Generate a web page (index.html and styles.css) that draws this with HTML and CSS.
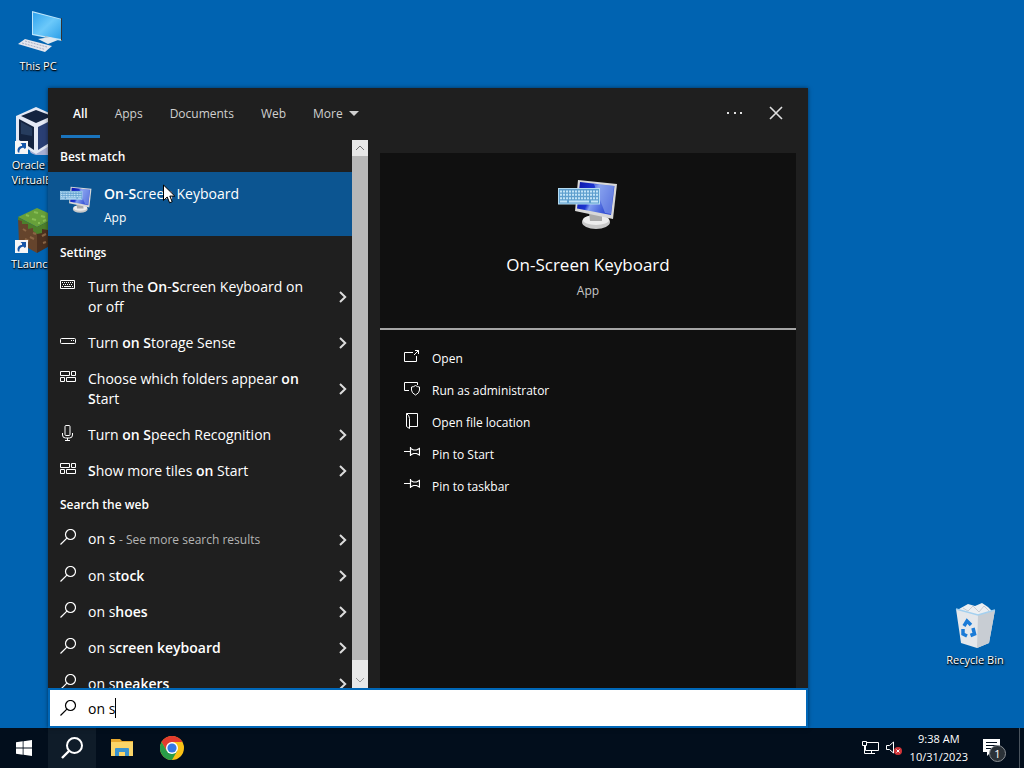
FILE: index.html
```html
<!DOCTYPE html>
<html lang="en">
<head>
    <meta charset="UTF-8">
    <meta name="viewport" content="width=device-width, initial-scale=1.0">
    <title>Desktop Search</title>
    <link rel="stylesheet" href="styles.css">
</head>
<body>
    <!-- shared icons -->
    <svg class="sprite" aria-hidden="true">
        <defs>
            <linearGradient id="screenBlue" x1="0" y1="0" x2="1" y2="0.4">
                <stop offset="0" stop-color="#0a14a8"/>
                <stop offset="0.45" stop-color="#1c35d0"/>
                <stop offset="0.55" stop-color="#7f9cf0"/>
                <stop offset="1" stop-color="#2a45d0"/>
            </linearGradient>
            <linearGradient id="pcScreen" x1="0" y1="0" x2="1" y2="1">
                <stop offset="0" stop-color="#2fa3ee"/>
                <stop offset="0.5" stop-color="#6cc9fa"/>
                <stop offset="1" stop-color="#2c9fe8"/>
            </linearGradient>
        </defs>
        <symbol id="i-search" viewBox="0 0 16 16">
            <circle cx="10.5" cy="5.5" r="5" fill="none" stroke="currentColor" stroke-width="1.2"/>
            <path d="M6.9 9.1 0.5 15.5" fill="none" stroke="currentColor" stroke-width="1.2"/>
        </symbol>
        <symbol id="i-chevron" viewBox="0 0 8 12">
            <path d="M1 1l5.2 5L1 11" fill="none" stroke="currentColor" stroke-width="2"/>
        </symbol>
        <symbol id="i-tiles" viewBox="0 0 16 16">
            <path d="M.5 2.5h9v4h-9zM11.5 2.5h4v4h-4zM.5 8.5h4v4h-4zM6.5 8.5h9v4h-9z" fill="none" stroke="currentColor"/>
        </symbol>
        <symbol id="i-pin" viewBox="0 0 16 16">
            <path d="M0 6.500h6.500M6.500 2v9M6.500 3.500l3 1.500h3l3-1.500v6.500l-3-1.500h-3l-3 1.500" fill="none" stroke="currentColor" stroke-width="1.200"/>
        </symbol>
        <symbol id="i-osk" viewBox="0 0 60 52">
            <ellipse cx="38" cy="43" rx="14" ry="7" fill="#c9c9c9"/>
            <ellipse cx="38" cy="41" rx="13" ry="5" fill="#ededed"/>
            <path d="M31 33l13 4v5H32z" fill="#aaa"/>
            <path d="M20 1l39 4-4 35-38-8z" fill="#d8d8d8"/>
            <path d="M22 3l34.500 4-3.500 29-34-6.500z" fill="url(#screenBlue)"/>
            <path d="M36 5l20 2-3 28-6-1z" fill="#8ea6ee" opacity="0.6"/>
            <path d="M0 9h42v16.500H0z" fill="#b5dcf2"/>
            <path d="M1 10h40v14.500H1z" fill="#5f9fce"/>
            <path d="M2 12.500h38M2 15.800h38M2 19.200h38" stroke="#c3e4f7" stroke-width="2" stroke-dasharray="2 1"/>
            <path d="M2 22.500h7M11 22.500h20M33 22.500h7" stroke="#c3e4f7" stroke-width="2"/>
        </symbol>
        <symbol id="i-shortcut" viewBox="0 0 13 13">
            <path d="M0 0h13v13H0z" fill="#f6f6f6"/>
            <path d="M3 11.500c-1.500-4 1-6.500 4-6.500V2.500h4v4L9.800 8 8.500 6.800C6 6.800 4 8.500 4.500 11.500z" fill="#1656a8"/>
            <path d="M5.500 2h5.500v5.500z" fill="#1656a8"/>
        </symbol>
    </svg>

    <main class="desktop">
        <div class="desktop-icons">
            <a class="shortcut" href="#">
                <svg viewBox="0 0 48 48">
                    <path d="M18 3l30 8v22L18 27z" fill="#bfe6fb"/>
                    <path d="M47 10l1.500.5V33l-1.500-.5z" fill="#333"/>
                    <path d="M19 4.500l28 7v19.500L19 26z" fill="url(#pcScreen)"/>
                    <path d="M31 28l8 2v4h-9z" fill="#9fb8c8"/>
                    <path d="M24 31l12-2 8 3-10 4z" fill="#dfe8ef"/>
                    <path d="M11 31l27 7-7 6-27-8z" fill="#e4e6ee"/>
                    <path d="M11 33l22 6M8 35l23 6.500" stroke="#a9afc4" stroke-dasharray="2 1"/>
                </svg>
                <span>This PC</span>
            </a>
            <a class="shortcut" href="#">
                <svg viewBox="0 0 48 48">
                    <ellipse cx="31" cy="44" rx="15" ry="5" fill="#a8b0d4"/>
                    <path d="M22 0L42 9v26L22 47 2 35V9z" fill="#e4e9f5"/>
                    <path d="M22 3l16 6-16 7-15-7z" fill="#14233f"/>
                    <path d="M5 12l15 8v23L5 33z" fill="#14233f"/>
                    <path d="M24 20l16-8v21L24 43z" fill="#2a3f74"/>
                    <path d="M7 15l11 6v8L7 27z" fill="#263c5e"/>
                    <use href="#i-shortcut" x="1" y="34" width="13" height="13"/>
                </svg>
                <span>Oracle VM VirtualBox</span>
            </a>
            <a class="shortcut" href="#">
                <svg viewBox="0 0 48 48">
                    <path d="M4 12l19 9v26L5 37z" fill="#65442c"/>
                    <path d="M23 21l19-9-1 25-18 10z" fill="#4b301f"/>
                    <path d="M23 2l20 9-20 10L4 11z" fill="#67a03a"/>
                    <path d="M4 11l19 10 20-10v5l-4 1v3l-5 0v4l-6-1v4l-5 1-4-3v-3l-5 1v-5l-6 0v-3l-4-1z" fill="#4c7f2b"/>
                    <path d="M12 9l3 1M20 6l4 1M18 13l4 1M27 10l4 1M29 15l3-1M24 17l2 0" stroke="#86bd52" stroke-width="2"/>
                    <path d="M9 23l3 2M16 31l4 2M19 27l3 1M11 33l4 2M28 30l4-2M29 37l3-1" stroke="#8b6545" stroke-width="2"/>
                    <use href="#i-shortcut" x="1" y="34" width="13" height="13"/>
                </svg>
                <span>TLauncher</span>
            </a>
        </div>

        <a class="shortcut recycle" href="#">
            <svg viewBox="0 0 48 48">
                <path d="M8 7l9-5 7 2 7-3 6 4 5 5-5 6H9z" fill="#eceff2"/>
                <path d="M12 6l5 3 5-5 6 6 5-6 5 5" fill="none" stroke="#c7ccd2"/>
                <path d="M5 7l22 6 17-5-6 33-12 5-16-5z" fill="#e4e7eb"/>
                <path d="M27 13l17-5-6 33-12 5z" fill="#c8cdd3"/>
                <path d="M5 7l22 6 17-5" fill="none" stroke="#a4d0ef" stroke-width="1.500"/>
                <g fill="none" stroke="#1b7bd7" stroke-width="3.500">
                    <path d="M13 24l3-5 4 4"/>
                    <path d="M22 26l1.500 6-4 1.500"/>
                    <path d="M16 34l-4-2 0-5"/>
                </g>
            </svg>
            <span>Recycle Bin</span>
        </a>

        <section class="search-flyout" aria-label="Search">
            <header class="flyout-header">
                <nav class="tabs">
                    <button class="tab active">All</button>
                    <button class="tab">Apps</button>
                    <button class="tab">Documents</button>
                    <button class="tab">Web</button>
                    <button class="tab">More <span class="caret-down"></span></button>
                </nav>
                <div class="header-actions">
                    <button aria-label="Options">
                        <svg width="16" height="16" viewBox="0 0 16 16"><path d="M0 7h2v2H0zM7 7h2v2H7zM13 7h2v2h-2z" fill="currentColor"/></svg>
                    </button>
                    <button aria-label="Close">
                        <svg width="14" height="14" viewBox="0 0 14 14"><path d="M1 1l12 12M13 1L1 13" stroke="currentColor" stroke-width="1.600"/></svg>
                    </button>
                </div>
            </header>

            <div class="flyout-body">
                <div class="results">
                    <h2>Best match</h2>
                    <button class="best-match">
                        <svg class="app-icon"><use href="#i-osk"/></svg>
                        <span class="best-text">
                            <span class="best-title"><b>On</b>-<b>S</b>creen Keyboard</span>
                            <span class="best-type">App</span>
                        </span>
                    </button>

                    <h2>Settings</h2>
                    <button class="result">
                        <svg class="result-icon" viewBox="0 0 16 16">
                            <path d="M.5 3.500h14v8H.5z" fill="none" stroke="currentColor"/>
                            <path d="M2 5.500h11M3 7.500h10" stroke="currentColor" stroke-dasharray="1 1"/>
                            <path d="M2 9.500h1M4 9.500h7M12 9.500h1" stroke="currentColor"/>
                        </svg>
                        <span class="result-text">Turn the <b>On</b>-<b>S</b>creen Keyboard on or off</span>
                        <svg class="chevron"><use href="#i-chevron"/></svg>
                    </button>
                    <button class="result">
                        <svg class="result-icon" viewBox="0 0 16 16">
                            <rect x="0.500" y="5.500" width="15" height="5" rx="1" fill="none" stroke="currentColor"/>
                            <path d="M11 7h1v1h-1zM13 7h1v1h-1z" fill="currentColor"/>
                        </svg>
                        <span class="result-text">Turn <b>on</b> <b>S</b>torage Sense</span>
                        <svg class="chevron"><use href="#i-chevron"/></svg>
                    </button>
                    <button class="result">
                        <svg class="result-icon"><use href="#i-tiles"/></svg>
                        <span class="result-text">Choose which folders appear <b>on</b> <b>S</b>tart</span>
                        <svg class="chevron"><use href="#i-chevron"/></svg>
                    </button>
                    <button class="result">
                        <svg class="result-icon" viewBox="0 0 16 16">
                            <path d="M5 1.500q0-1 1-1h3q1 0 1 1v8q0 1-1 1H6q-1 0-1-1zM2.500 8v2q0 3 3 3h4q3 0 3-3V8M7.500 13v2.500M5 15.500h5" fill="none" stroke="currentColor"/>
                        </svg>
                        <span class="result-text">Turn <b>on</b> <b>S</b>peech Recognition</span>
                        <svg class="chevron"><use href="#i-chevron"/></svg>
                    </button>
                    <button class="result">
                        <svg class="result-icon"><use href="#i-tiles"/></svg>
                        <span class="result-text"><b>S</b>how more tiles <b>on</b> Start</span>
                        <svg class="chevron"><use href="#i-chevron"/></svg>
                    </button>

                    <h2>Search the web</h2>
                    <button class="result">
                        <svg class="result-icon"><use href="#i-search"/></svg>
                        <span class="result-text">on s <small>- See more search results</small></span>
                        <svg class="chevron"><use href="#i-chevron"/></svg>
                    </button>
                    <button class="result">
                        <svg class="result-icon"><use href="#i-search"/></svg>
                        <span class="result-text">on s<b>tock</b></span>
                        <svg class="chevron"><use href="#i-chevron"/></svg>
                    </button>
                    <button class="result">
                        <svg class="result-icon"><use href="#i-search"/></svg>
                        <span class="result-text">on s<b>hoes</b></span>
                        <svg class="chevron"><use href="#i-chevron"/></svg>
                    </button>
                    <button class="result">
                        <svg class="result-icon"><use href="#i-search"/></svg>
                        <span class="result-text">on s<b>creen keyboard</b></span>
                        <svg class="chevron"><use href="#i-chevron"/></svg>
                    </button>
                    <button class="result">
                        <svg class="result-icon"><use href="#i-search"/></svg>
                        <span class="result-text">on s<b>neakers</b></span>
                        <svg class="chevron"><use href="#i-chevron"/></svg>
                    </button>
                </div>

                <div class="scrollbar" aria-hidden="true">
                    <svg viewBox="0 0 16 16"><path d="M4 10l4-4 4 4" fill="none" stroke="#777"/></svg>
                    <div class="thumb"></div>
                    <svg viewBox="0 0 16 16"><path d="M4 6l4 4 4-4" fill="none" stroke="#999"/></svg>
                </div>

                <div class="details">
                    <div class="details-head">
                        <svg class="details-icon"><use href="#i-osk"/></svg>
                        <h1>On-Screen Keyboard</h1>
                        <p>App</p>
                    </div>
                    <div class="actions">
                        <button>
                            <svg viewBox="0 0 16 16"><path d="M9 3.500H.5v9h12V7M10 6l4.500-4.500M11 1.500h3.500V5" fill="none" stroke="currentColor"/></svg>
                            Open
                        </button>
                        <button>
                            <svg viewBox="0 0 16 16"><path d="M5 9.500H.5v-8h13V4M11.500 4.500q2 1.500 4 1.500v3q0 3-4 5-4-2-4-5V6q2 0 4-1.500z" fill="none" stroke="currentColor"/></svg>
                            Run as administrator
                        </button>
                        <button>
                            <svg viewBox="0 0 16 16"><path d="M2.500.5h11v13H6M2.500.5v13l3 2V5.500q0-3-3-5z" fill="none" stroke="currentColor"/></svg>
                            Open file location
                        </button>
                        <button>
                            <svg><use href="#i-pin"/></svg>
                            Pin to Start
                        </button>
                        <button>
                            <svg><use href="#i-pin"/></svg>
                            Pin to taskbar
                        </button>
                    </div>
                </div>
            </div>

            <label class="search-box">
                <svg class="result-icon"><use href="#i-search"/></svg>
                <input type="text" value="on s" size="3" aria-label="Type here to search">
                <span class="text-caret"></span>
            </label>
        </section>

        <svg class="pointer" viewBox="0 0 12 20">
            <path d="M.5 1v15.500l3.700-3.500 2.400 5.800 2.600-1.100-2.400-5.600h5z" fill="#fff" stroke="#000"/>
        </svg>
    </main>

    <footer class="taskbar">
        <div class="task-buttons">
            <button aria-label="Start">
                <svg width="16" height="16" viewBox="0 0 16 16"><path d="M0 2.300L6.700 1.300v6.300H0zM7.500 1.200L16 0v7.600H7.500zM0 8.400h6.700v6.300L0 13.700zM7.500 8.400H16V16l-8.500-1.200z" fill="#fff"/></svg>
            </button>
            <button class="selected" aria-label="Search">
                <svg width="22" height="22" viewBox="0 0 22 22"><circle cx="13.500" cy="8.500" r="7.500" fill="none" stroke="#fff" stroke-width="2"/><path d="M8 14l-7 7" stroke="#fff" stroke-width="2.400"/></svg>
            </button>
            <button aria-label="File Explorer">
                <svg width="22" height="20" viewBox="0 0 22 20">
                    <path d="M0 1h9l2 2h11v15H0z" fill="#e8a92e"/>
                    <path d="M0 4h22v14H0z" fill="#fbd568"/>
                    <path d="M4 18v-7q0-1 1-1h12q1 0 1 1v7h-4v-4H8v4z" fill="#3a93cf"/>
                    <path d="M8 14h6v2H8z" fill="#fbd568"/>
                </svg>
            </button>
            <button aria-label="Chrome">
                <svg width="24" height="24" viewBox="0 0 24 24">
                    <circle cx="12" cy="12" r="12" fill="#fbc116"/>
                    <path d="M1.600 6A12 12 0 0 1 22.400 6H12L6.800 15z" fill="#e33b2e"/>
                    <path d="M1.600 6A12 12 0 0 0 12 24l5.200-9-10.400 0z" fill="#2a9d48"/>
                    <circle cx="12" cy="12" r="6" fill="#fff"/>
                    <circle cx="12" cy="12" r="4.600" fill="#3578e5"/>
                </svg>
            </button>
        </div>
        <div class="tray">
            <svg width="17" height="16" viewBox="0 0 17 16"><path d="M4 2.500h12.500v8H3.500V6M.5 1.500h4v4h-4zM2.500 5.500v8H7M9.500 10.500v3M6 13.500h7" fill="none" stroke="#fff"/></svg>
            <svg width="17" height="16" viewBox="0 0 17 16">
                <path d="M.5 5.500h3l4-3.500v11l-4-3.500h-3z" fill="none" stroke="#fff"/>
                <circle cx="12" cy="11" r="4" fill="#d13438"/>
                <path d="M10.500 9.500l3 3M13.500 9.500l-3 3" stroke="#fff"/>
            </svg>
            <time class="clock" datetime="2023-10-31T09:38">9:38 AM<br>10/31/2023</time>
            <button class="notifications" aria-label="1 new notification">
                <svg width="18" height="18" viewBox="0 0 18 18"><path d="M0 0h17v13H8l-4 4v-4H0z" fill="#fff"/><path d="M3 3.500h11M3 6.500h11M3 9.500h7" stroke="#03101f"/></svg>
                <span class="badge">1</span>
            </button>
        </div>
    </footer>
</body>
</html>
```
FILE: styles.css
```css
* {
    box-sizing: border-box;
}

body {
    font-family: "Open Sans", "Noto Sans", sans-serif;
    font-size: 12px;
    line-height: 16px;
    color: #fff;
    background-color: #0063b1;
    margin: 0;
    display: flex;
    flex-direction: column;
    height: 100vh;
    overflow: hidden;
}

button {
    font: inherit;
    color: inherit;
    background: none;
    border: none;
    padding: 0;
    text-align: left;
}

b {
    font-weight: 600;
}

.sprite {
    position: absolute;
    width: 0;
    height: 0;
}

/* Desktop */
.desktop {
    position: relative;
    flex: 1;
    min-height: 0;
}

.desktop-icons {
    display: flex;
    flex-direction: column;
    gap: 2px;
    padding-top: 8px;
}

.shortcut {
    display: flex;
    flex-direction: column;
    align-items: center;
    gap: 2px;
    width: 76px;
    min-height: 97px;
    color: #fff;
    font-size: 11px;
    line-height: 15px;
    text-align: center;
    text-decoration: none;
    text-shadow: 1px 1px 2px #000, 0 1px 1px #000;
}

.shortcut svg {
    width: 48px;
    height: 48px;
}

.recycle {
    position: absolute;
    right: 11px;
    bottom: 29px;
}

.pointer {
    position: absolute;
    left: 163px;
    top: 184px;
    width: 12px;
    height: 20px;
}

/* Search flyout */
.search-flyout {
    position: absolute;
    left: 48px;
    top: 88px;
    bottom: 0;
    width: 760px;
    max-width: calc(100% - 48px);
    display: flex;
    flex-direction: column;
    background: #1f1f1f;
    box-shadow: 0 0 4px rgba(0, 0, 0, 0.5);
}

.flyout-header {
    display: flex;
    justify-content: space-between;
    height: 52px;
    padding: 0 25px 0 13px;
}

.tabs {
    display: flex;
    gap: 3px;
}

.tab {
    display: flex;
    align-items: center;
    gap: 6px;
    height: 50px;
    padding: 4px 12px 0;
    border-bottom: 3px solid transparent;
    color: #d0d0d0;
}

.tab.active {
    color: #fff;
    font-weight: 600;
    border-bottom-color: #1a74bd;
}

.caret-down {
    border: 5px solid transparent;
    border-top-color: #d0d0d0;
    border-bottom: none;
}

.header-actions {
    display: flex;
    align-items: center;
    gap: 26px;
    height: 50px;
    color: #e0e0e0;
}

.header-actions svg {
    display: block;
}

.flyout-body {
    flex: 1;
    min-height: 0;
    display: flex;
}

.results {
    width: 304px;
    overflow: hidden;
}

.results h2 {
    margin: 0;
    padding: 2px 12px 0;
    font-size: 12px;
    font-weight: 600;
    line-height: 30px;
}

.best-match {
    display: flex;
    gap: 12px;
    width: 100%;
    height: 64px;
    padding: 12px 12px 8px;
    background: #0c5591;
}

.app-icon {
    width: 32px;
    height: 28px;
    margin-top: 2px;
}

.best-text {
    display: flex;
    flex-direction: column;
    gap: 4px;
    line-height: 20px;
}

.best-title {
    font-size: 14px;
}

.result {
    display: flex;
    align-items: center;
    gap: 12px;
    width: 100%;
    padding: 9px 5px 7px 12px;
    font-size: 14px;
    line-height: 20px;
}

.result-icon {
    width: 16px;
    height: 16px;
    align-self: flex-start;
    flex-shrink: 0;
}

.result-text {
    flex: 1;
    padding-right: 24px;
}

.result small {
    color: #b4b4b4;
    font-size: 12px;
}

.chevron {
    width: 8px;
    height: 12px;
    flex-shrink: 0;
    color: #dcdcdc;
}

.scrollbar {
    display: flex;
    flex-direction: column;
    width: 16px;
    background: #e8e8e8;
}

.scrollbar svg {
    width: 16px;
    height: 16px;
}

.thumb {
    flex: 1;
    margin-bottom: 12px;
    background: #b8b8b8;
}

.details {
    flex: 1;
    margin: 13px 12px 0;
    background: #101010;
}

.details-head {
    display: flex;
    flex-direction: column;
    align-items: center;
    height: 177px;
    padding-top: 26px;
    border-bottom: 2px solid #a5a5a5;
}

.details-icon {
    width: 60px;
    height: 52px;
}

.details-head h1 {
    margin: 22px 0 6px;
    font-size: 17px;
    font-weight: 400;
    line-height: 24px;
}

.details-head p {
    margin: 0;
    color: #c8c8c8;
}

.actions {
    display: flex;
    flex-direction: column;
    padding: 13px 24px;
}

.actions button {
    display: flex;
    gap: 12px;
    width: 100%;
    padding: 8px 0;
}

.actions svg {
    width: 16px;
    height: 16px;
    margin-top: -2px;
}

.search-box {
    display: flex;
    align-items: center;
    height: 40px;
    padding: 0 10px;
    background: #fff;
    border: 2px solid #0067b8;
    color: #000;
}

.search-box .result-icon {
    align-self: center;
    margin-right: 12px;
}

.search-box input {
    field-sizing: content;
    font-family: inherit;
    font-size: 14px;
    color: #000;
    border: none;
    outline: none;
    padding: 0;
    background: none;
}

.text-caret {
    width: 1px;
    height: 20px;
    background: #000;
}

/* Taskbar */
.taskbar {
    display: flex;
    justify-content: space-between;
    height: 40px;
    background: #020e1c;
}

.task-buttons {
    display: flex;
    gap: 2px;
}

.task-buttons button {
    display: flex;
    align-items: center;
    justify-content: center;
    width: 48px;
}

.task-buttons .selected {
    margin-left: -2px;
    background: #0f1c29;
}

.tray {
    display: flex;
    align-items: center;
    gap: 7px;
    margin-right: 4px;
    border-right: 1px solid #4a545e;
}

.clock {
    font-size: 11px;
    line-height: 18px;
    text-align: center;
}

.notifications {
    position: relative;
    width: 44px;
    padding-left: 8px;
}

.notifications svg {
    display: block;
}

.badge {
    position: absolute;
    left: 14px;
    top: 6px;
    width: 17px;
    height: 17px;
    border: 1px solid #8a8f94;
    border-radius: 50%;
    background: #2b3238;
    font-size: 11px;
    line-height: 15px;
    text-align: center;
}
```
